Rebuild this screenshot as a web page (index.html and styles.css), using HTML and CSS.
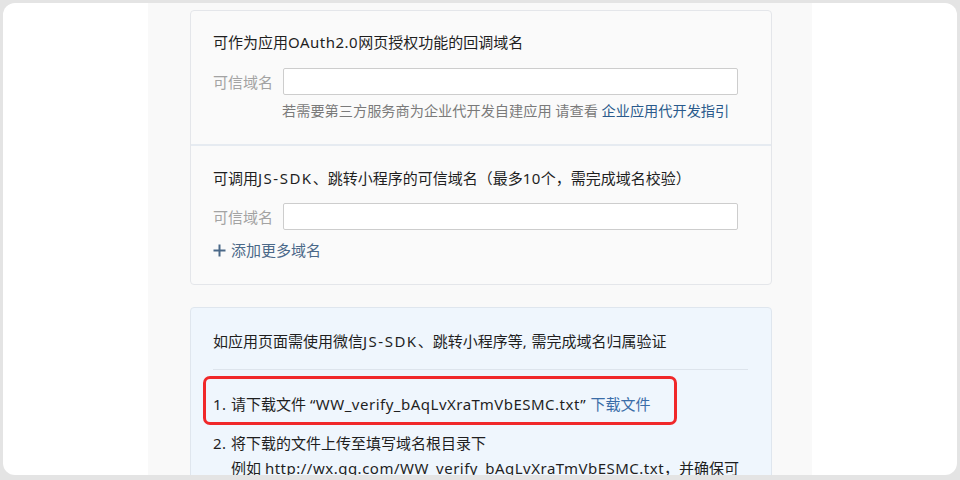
FILE: index.html
```html
<!DOCTYPE html>
<html lang="zh-CN">
<head>
<meta charset="utf-8">
<link rel="stylesheet" href="styles.css">
</head>
<body>
<div class="frame">
  <div class="column">
    <div class="card">
      <div class="section first">
        <div class="title">可作为应用<span class="en">OAuth2.0</span>网页授权功能的回调域名</div>
        <div class="field">
          <span class="label">可信域名</span>
          <input class="input" type="text">
        </div>
        <div class="helper">若需要第三方服务商为企业代开发自建应用 请查看 <a class="link">企业应用代开发指引</a></div>
      </div>
      <div class="section second">
        <div class="title">可调用<span class="en wide">JS-SDK</span>、跳转小程序的可信域名（最多<span class="en">10</span>个，需完成域名校验）</div>
        <div class="field">
          <span class="label">可信域名</span>
          <input class="input" type="text">
        </div>
        <div class="add"><svg class="plus" width="13" height="13" viewBox="0 0 13 13"><path d="M6.5 0.5v12M0.5 6.5h12" stroke="#4a6888" stroke-width="2"/></svg>添加更多域名</div>
      </div>
    </div>
    <div class="card verify">
      <div class="intro">如应用页面需使用微信<span class="en wide">JS-SDK</span>、跳转小程序等<span class="en">, </span>需完成域名归属验证</div>
      <div class="divider"></div>
      <div class="step one"><span class="en">1. </span>请下载文件 <span class="en">“WW_verify_bAqLvXraTmVbESMC.txt” </span><a class="dl">下载文件</a></div>
      <div class="step two"><span class="en">2. </span>将下载的文件上传至填写域名根目录下</div>
      <div class="step sub">例如 <span class="en">http://wx.qq.com/WW_verify_bAqLvXraTmVbESMC.txt</span>，并确保可</div>
      <div class="highlight"></div>
    </div>
  </div>
</div>
</body>
</html>
```

FILE: styles.css
```css
* { box-sizing: border-box; }
html, body { margin: 0; padding: 0; }
body {
  width: 960px;
  height: 480px;
  overflow: hidden;
  background: #e4e4e4;
  font-family: "Noto Sans", "Noto Sans CJK SC", sans-serif;
  font-size: 15px;
  color: #1f1f1f;
}
.en { letter-spacing: 0.5px; }
.en.wide { letter-spacing: 1.5px; }
.frame {
  margin: 3px 3px 0 3px;
  height: 472px;
  background: #fff;
  border-radius: 12px;
  overflow: hidden;
}
.column {
  margin-left: 145px;
  width: 664px;
  height: 100%;
  background: #f9f9f9;
  padding: 7px 40px 0 42px;
}
.card {
  border: 1px solid #e4e6ea;
  border-radius: 4px;
  background: #fafafa;
}
.section { padding: 20px 22px 23px; }
.section.first { border-bottom: 2px solid #e6ebf1; }
.section.second { padding: 21px 22px 24px; }
.title { line-height: 22px; white-space: nowrap; }
.field { display: flex; align-items: center; margin-top: 15px; }
.section.second .field { margin-top: 14px; }
.label { width: 70px; color: #a3a3a3; line-height: 20px; white-space: nowrap; }
.input {
  width: 455px;
  height: 27px;
  border: 1px solid #cdcdcd;
  border-radius: 2px;
  background: #fff;
  padding: 0 8px;
  margin: 0;
  outline: none;
}
.helper {
  margin-top: 6px;
  margin-left: 69px;
  line-height: 20px;
  font-size: 14.2px;
  color: #7a7a7a;
  white-space: nowrap;
}
.link { color: #2a5a8c; }
.add {
  display: flex;
  align-items: center;
  gap: 5px;
  margin-top: 10px;
  line-height: 20px;
  color: #4a6888;
}
.verify {
  position: relative;
  margin-top: 22px;
  background: #eff6fd;
  border-color: #dfe6ee;
  padding: 22px 23px 0 22px;
  height: 200px;
}
.intro { line-height: 22px; white-space: nowrap; }
.divider { height: 1px; background: #dde4ec; margin-top: 17px; }
.step { line-height: 25px; white-space: nowrap; }
.step.one { margin-top: 22px; }
.step.two { margin-top: 14px; }
.step.sub { padding-left: 18px; }
.dl { color: #3a6da8; }
.highlight {
  position: absolute;
  left: 12px;
  top: 68px;
  width: 474px;
  height: 49px;
  border: 3px solid #f0282a;
  border-radius: 7px;
}
```
